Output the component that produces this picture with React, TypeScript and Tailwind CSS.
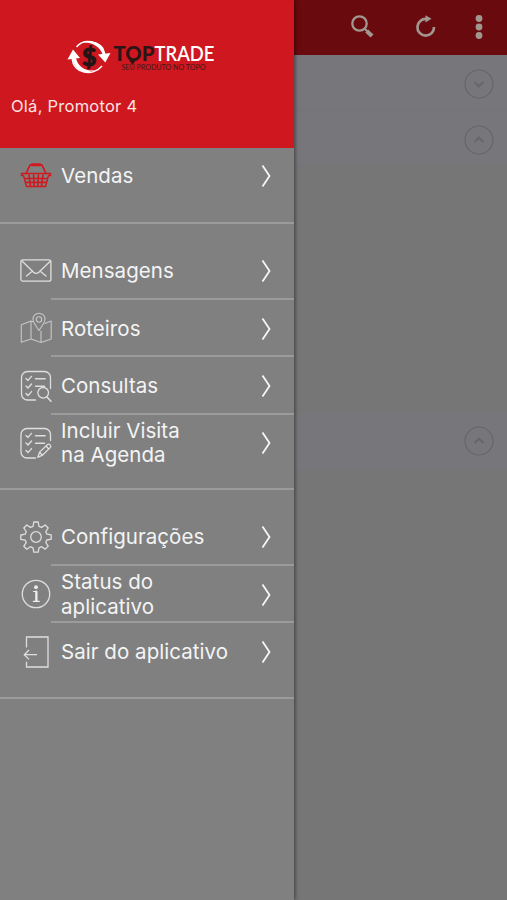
import { ReactNode } from "react";

const icon = {
  width: 32,
  height: 32,
  viewBox: "0 0 32 32",
  fill: "none",
  stroke: "#dedede",
  strokeWidth: 1.3,
  strokeLinecap: "round" as const,
  strokeLinejoin: "round" as const,
};

const BasketIcon = () => (
  <svg {...icon} stroke="#cf1a20">
    <path d="M6 13.5 10 5.2h12L26 13.5" strokeWidth="1.7" />
    <path d="M12 4.7h8" strokeWidth="3" />
    <path d="M1.5 13.5h29v1.9H28.500l-3 11.200h-19l-3-11.200H1.500Z" strokeWidth="1.5" />
    <path d="M5 18.5h22M6 22.3h20M9 15l1.500 11M13.600 15l.600 11M18.400 15l-.600 11M23 15l-1.500 11" strokeWidth="1.700" />
  </svg>
);

const MailIcon = () => (
  <svg {...icon}>
    <rect x="0.9" y="4.900" width="30" height="21.300" rx="2" />
    <path d="m2 6 11.500 11.200q2.700 2.300 5.400 0L30.500 6M6.500 21l6-5M26 21l-6-5" />
  </svg>
);

const MapIcon = () => (
  <svg {...icon} stroke="#c5c5c5" strokeWidth="1.1">
    <path d="M13 9.8 11 9 1.3 12.8v17.500L11 27l10 3.500 10.200-3.500V9L25 11.500M11 9v18M21 19v11.500" />
    <path d="M19 18.500c-1.800-3.300-6-7.500-6-11.300a6 6 0 0 1 12 0c0 3.800-4.200 8-6 11.300Z" />
    <circle cx="19" cy="7.500" r="2.700" />
  </svg>
);

const Checks = () => (
  <path d="m6 8.400 2 2 3.500-4M6 16l2 2 3.500-4M6 23.600l2 2 3.500-4M15.500 8.800h9.700M15.500 16.300h9" strokeWidth="1.400" />
);

const SearchListIcon = () => (
  <svg {...icon}>
    <path d="M15.500 30H7.500a6 6 0 0 1-6-6V7.500a6 6 0 0 1 6-6h17a6 6 0 0 1 6 6v11" />
    <Checks />
    <circle cx="23.200" cy="22.800" r="5.300" />
    <path d="m27 27 4 4.200" strokeWidth="1.600" />
  </svg>
);

const EditListIcon = () => (
  <svg {...icon}>
    <path d="M15.500 31H7a6 6 0 0 1-6-6V7.500a6 6 0 0 1 6-6h17.500a6 6 0 0 1 6 6v6" />
    <Checks />
    <path d="m17.800 30.300 1.800-5.200 8-7.600q1.300-.8 2.500.4t.3 2.500l-8 7.800ZM19.600 25.100l2.800 3.100M26 19l2.800 3" strokeWidth="1.300" />
  </svg>
);

const GearIcon = () => (
  <svg {...icon}>
    <path d="M13.800 1h4.400l.8 4.300 2.600 1.100L25.200 4l3 3-2.400 3.600 1 2.500 4.400.8v4.300l-4.400.8-1 2.500 2.400 3.600-3 3-3.600-2.400-2.600 1.100-.8 4.300h-4.400l-.8-4.300-2.600-1.100L6.800 28.200l-3-3 2.400-3.600-1-2.500-4.400-.8V14l4.400-.8 1-2.500L3.800 7l3-3 3.600 2.400L13 5.300Z" />
    <circle cx="16" cy="16" r="5.300" />
  </svg>
);

const InfoIcon = () => (
  <svg {...icon}>
    <circle cx="16" cy="16" r="13.700" />
    <circle cx="16" cy="9.200" r="1.900" fill="#eee" stroke="none" />
    <path d="M13.500 13.500h3.300v9.500M13.300 23.300h6" stroke="#eee" strokeWidth="1.200" />
    <path d="M16.200 13.500v9.500" stroke="#eee" strokeWidth="2" />
  </svg>
);

const ExitIcon = () => (
  <svg {...icon} strokeLinecap="butt" strokeLinejoin="miter">
    <path d="M6.500 11.500V1H28v30H6.500v-5.200M17 18.700H4.500M9 14l-4.700 4.700L9 23.400" />
  </svg>
);

const Logo = () => (
  <svg className="ml-[66px] overflow-visible" width="160" height="38" viewBox="0 0 160 38">
    <g fill="none" stroke="#fff" strokeWidth="1.500">
      <path d="M10.500 9C17 .5 34 1 38.500 16" />
      <path d="M6 20c1.500 16 21 19 30 8" />
    </g>
    <path d="M32 16.500 44.500 15 39.300 24.500ZM1.500 21.500 7 11.500l7 8.500Z" fill="#fff" />
    <path d="M15.500 5C22 1.500 33 3 37.500 10l2 6h-3C34 9 25 3 15.500 5ZM6.500 20h3.500c2 9 10 14 19 12C19 37.500 8 32 6.500 20Z" fill="#fff" />
    <text x="23.200" y="28" textAnchor="middle" fontSize="25" fontWeight="900" fill="#241416" stroke="#241416" strokeWidth="0.800" className="font-['Lato','Liberation_Sans',sans-serif]">$</text>
    <g className="font-['Lato','Liberation_Sans',sans-serif]">
      <text x="47.500" y="22.500" fontSize="20.500" fontWeight="900" fill="#2b1517" textLength="41" lengthAdjust="spacingAndGlyphs">TOP</text>
      <text x="88.500" y="22.500" fontSize="20.500" fontWeight="600" fill="#fff" textLength="60" lengthAdjust="spacingAndGlyphs">TRADE</text>
      <text x="55.500" y="32.300" fontSize="7.500" fill="#44191b" textLength="84" lengthAdjust="spacingAndGlyphs">SEU PRODUTO NO TOPO</text>
    </g>
    <path d="m62.500 21 4 6 4-6Z" fill="#2b1517" />
  </svg>
);

type Item = { label: ReactNode; icon: ReactNode };

const sections: Item[][] = [
  [{ label: "Vendas", icon: <BasketIcon /> }],
  [
    { label: "Mensagens", icon: <MailIcon /> },
    { label: "Roteiros", icon: <MapIcon /> },
    { label: "Consultas", icon: <SearchListIcon /> },
    { label: <>Incluir Visita<br />na Agenda</>, icon: <EditListIcon /> },
  ],
  [
    { label: "Configurações", icon: <GearIcon /> },
    { label: <>Status do<br />aplicativo</>, icon: <InfoIcon /> },
    { label: "Sair do aplicativo", icon: <ExitIcon /> },
  ],
];

function MenuRow({ item, last }: { item: Item; last: boolean }) {
  return (
    <button className="flex h-[57.5px] w-full items-stretch pl-5 text-left">
      <span className="flex w-[31px] shrink-0 items-center">
        <span className="w-8 shrink-0">{item.icon}</span>
      </span>
      <span className={`flex flex-1 items-center pl-[10px] pr-[20px] ${last ? "" : "border-b-2 border-[#9b9b9b] pt-[3px]"}`}>
        <span className="flex-1 whitespace-nowrap text-[20.5px] leading-[24.5px] tracking-[0.05px] text-[#f4f4f4]">{item.label}</span>
        <svg width="16" height="24" viewBox="0 0 16 24" fill="none" stroke="#f6f6f6" strokeWidth="1.8">
          <path d="m4.500 1.500 7 10.500-7 10.500" />
        </svg>
      </span>
    </button>
  );
}

function RoundArrow({ up = false }: { up?: boolean }) {
  return (
    <svg width="30" height="30" viewBox="0 0 30 30" fill="none" stroke="#66666a">
      <circle cx="15" cy="15" r="14" strokeWidth="1.2" />
      <path d={up ? "m10.500 17 4.500-4.300 4.500 4.300" : "m10.500 13 4.500 4.300 4.500-4.300"} strokeWidth="2" />
    </svg>
  );
}

export default function App() {
  return (
    <main className="flex h-[900px] w-[507px] overflow-hidden bg-[#767676] font-['Inter','Liberation_Sans',sans-serif]">
      <aside className="z-10 w-[294px] shrink-0 bg-[#808080] shadow-[1px_0_4px_rgba(0,0,0,0.5)]">
        <header className="h-[147.5px] bg-[#ce171e] pt-[38px]">
          <Logo />
          <p className="ml-[11px] mt-[18px] text-[16.5px] leading-6 tracking-[0.25px] text-[#fbe3e3]">Olá, Promotor 4</p>
        </header>
        <nav>
          {sections.map((items, i) => (
            <section key={i} className={`border-b-2 border-[#9b9b9b] ${i > 0 ? "pb-4 pt-[18px]" : "pb-[17px]"}`}>
              {items.map((item, j) => (
                <MenuRow key={j} item={item} last={j === items.length - 1} />
              ))}
            </section>
          ))}
        </nav>
      </aside>
      <div className="flex-1">
        <div className="flex h-[54.5px] items-center bg-[#680a0e] pl-[56px]">
          <svg width="26" height="26" viewBox="0 0 26 26" fill="none" stroke="#a29690">
            <circle cx="9.500" cy="9.500" r="7.200" strokeWidth="2.300" />
            <path d="m14.500 14.500 3 3" strokeWidth="2" />
            <path d="m16.700 17 5.300 5" strokeWidth="4.200" />
          </svg>
          <svg className="ml-[37px]" width="26" height="26" viewBox="0 0 26 26" fill="none" stroke="#a29690">
            <path d="M13.500 5A8.300 8.300 0 1 0 21 13" strokeWidth="2.700" />
            <path d="m12.500 1.200 6 3.500-6 3.800Z" fill="#a29690" stroke="none" />
          </svg>
          <svg className="ml-[35px]" width="10" height="26" viewBox="0 0 10 26" fill="#a29690">
            <circle cx="5" cy="4.500" r="3.400" />
            <circle cx="5" cy="13" r="3.400" />
            <circle cx="5" cy="21.500" r="3.400" />
          </svg>
        </div>
        <div className="flex h-[56px] items-center justify-end border-b border-[#747477] bg-[#77777b] pr-[13px] pt-[3px]">
          <RoundArrow />
        </div>
        <div className="flex h-[54px] items-center justify-end bg-[#77777b] pr-[13px] pt-[5px]">
          <RoundArrow up />
        </div>
        <div className="h-[248px]" />
        <div className="flex h-[57px] items-center justify-end bg-[#77777b] pr-[13px]">
          <RoundArrow up />
        </div>
      </div>
    </main>
  );
}
